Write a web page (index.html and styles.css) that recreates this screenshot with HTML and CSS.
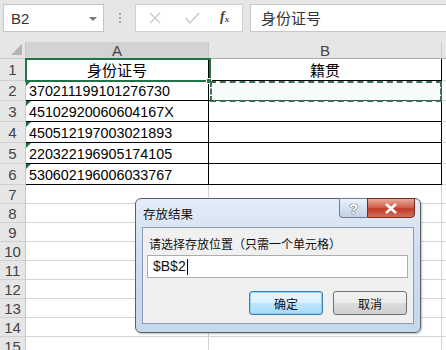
FILE: index.html
```html
<!DOCTYPE html>
<html>
<head>
<meta charset="utf-8">
<link rel="stylesheet" href="styles.css">
</head>
<body>
<div class="app">
  <div class="toolbar">
    <div class="namebox"><span>B2</span><span class="dd"></span></div>
    <div class="sep"><i></i><i></i><i></i></div>
    <div class="fbtns">
      <svg width="108" height="26" viewBox="0 0 108 26">
        <path d="M14 8 L24 18 M24 8 L14 18" stroke="#c8c8c8" stroke-width="1.4" fill="none"/>
        <path d="M50 13 L54 18 L63 8" stroke="#c8c8c8" stroke-width="1.4" fill="none"/>
      </svg>
      <span class="fx">f<sub>x</sub></span>
    </div>
    <div class="fbar">身份证号</div>
  </div>
  <div class="grid">
    <div class="corner"><span class="tri"></span></div>
    <div class="ch sel">A</div>
    <div class="ch">B</div>
    <div class="ch last"></div>

    <div class="rh">1</div>
    <div class="c t ctr">身份证号</div>
    <div class="c t ctr tr">籍贯</div>
    <div class="c last"></div>

    <div class="rh">2</div>
    <div class="c t num"><span class="flag"></span>370211199101276730</div>
    <div class="c t tr"></div>
    <div class="c last"></div>

    <div class="rh">3</div>
    <div class="c t num"><span class="flag"></span>45102920060604167X</div>
    <div class="c t tr"></div>
    <div class="c last"></div>

    <div class="rh">4</div>
    <div class="c t num"><span class="flag"></span>450512197003021893</div>
    <div class="c t tr"></div>
    <div class="c last"></div>

    <div class="rh">5</div>
    <div class="c t num"><span class="flag"></span>220322196905174105</div>
    <div class="c t tr"></div>
    <div class="c last"></div>

    <div class="rh">6</div>
    <div class="c t num"><span class="flag"></span>530602196006033767</div>
    <div class="c t tr"></div>
    <div class="c last"></div>

    <div class="rh">7</div><div class="c"></div><div class="c"></div><div class="c last"></div>
    <div class="rh">8</div><div class="c"></div><div class="c"></div><div class="c last"></div>
    <div class="rh">9</div><div class="c"></div><div class="c"></div><div class="c last"></div>
    <div class="rh">10</div><div class="c"></div><div class="c"></div><div class="c last"></div>
    <div class="rh">11</div><div class="c"></div><div class="c"></div><div class="c last"></div>
    <div class="rh">12</div><div class="c"></div><div class="c"></div><div class="c last"></div>
    <div class="rh">13</div><div class="c"></div><div class="c"></div><div class="c last"></div>
    <div class="rh">14</div><div class="c"></div><div class="c"></div><div class="c last"></div>
    <div class="rh">15</div><div class="c"></div><div class="c"></div><div class="c last"></div>
  </div>

  <div class="selbox"></div>
  <div class="handle"></div>
  <div class="ants"></div>

  <div class="dialog">
    <div class="titlebar">
      <span class="title">存放结果</span>
      <div class="tbtns">
        <div class="help">?</div>
        <div class="close">
          <svg width="14" height="11" viewBox="0 0 14 11"><path d="M2 1 L12 10 M12 1 L2 10" stroke="#fff" stroke-width="2.6" fill="none"/></svg>
        </div>
      </div>
    </div>
    <div class="panel">
      <div class="label">请选择存放位置<span class="paren">（</span>只需一个单元格<span class="paren">）</span></div>
      <div class="input">$B$2<span class="caret"></span></div>
      <div class="actions">
        <div class="btn primary">确定</div>
        <div class="btn">取消</div>
      </div>
    </div>
  </div>
</div>
</body>
</html>
```
FILE: styles.css
```css
* { box-sizing: border-box; }
html, body { margin: 0; padding: 0; }
body {
  width: 446px; height: 350px; overflow: hidden;
  font-family: "Liberation Sans", "Noto Sans CJK SC", sans-serif;
  background: #fff;
}
.app { position: relative; width: 446px; height: 350px; overflow: hidden; }

.toolbar {
  height: 42px; background: #e6e6e6;
  display: flex; align-items: flex-start; padding-top: 4px;
}
.namebox {
  margin-left: 3px; width: 101px; height: 28px;
  background: #fff; border: 1px solid #c6c6c6;
  display: flex; align-items: center; justify-content: space-between;
  padding: 0 6px 0 7px; font-size: 15px; color: #333;
}
.dd {
  width: 0; height: 0; border-left: 4px solid transparent; border-right: 4px solid transparent;
  border-top: 4px solid #777; margin-top: 1px;
}
.sep {
  width: 31px; height: 28px; display: flex; flex-direction: column;
  align-items: center; justify-content: center; gap: 2px;
}
.sep i { display: block; width: 2px; height: 2px; background: #a8a8a8; }
.fbtns {
  width: 108px; height: 28px; background: #fff; border: 1px solid #d0d0d0;
  position: relative;
}
.fbtns svg { display: block; }
.fx {
  position: absolute; left: 84px; top: 4px;
  font-family: "Liberation Serif", serif; font-style: italic; font-weight: bold;
  font-size: 14px; color: #444;
}
.fx sub { font-size: 9px; vertical-align: -1px; }
.fbar {
  margin-left: 7px; flex: 1; height: 28px; background: #fff;
  border: 1px solid #c6c6c6; border-right: none;
  padding-left: 10px; line-height: 26px;
  font-family: "Noto Sans CJK SC", sans-serif; font-size: 15px; color: #333;
}

.grid {
  display: grid;
  grid-template-columns: 26px 183px 233px 1fr;
  grid-template-rows: 17px 22px 20px 21px 21px 21px 21px repeat(9, 19px);
}
.corner, .ch, .rh { background: #e6e6e6; color: #444; }
.corner { border-right: 1px solid #c8c8c8; border-bottom: 1px solid #c8c8c8; position: relative; }
.tri {
  position: absolute; right: 3px; bottom: 3px; width: 0; height: 0;
  border-left: 11px solid transparent; border-bottom: 11px solid #b4b4b4;
}
.ch {
  border-right: 1px solid #c8c8c8; border-bottom: 1px solid #ababab;
  text-align: center; font-size: 15px; line-height: 17px;
}
.ch.sel { background: #d3d3d3; border-bottom: 1px solid #9d9d9d; }
.ch.last { border-right: none; }
.rh {
  border-right: 1px solid #c8c8c8; border-bottom: 1px solid #d0d0d0;
  text-align: center; font-size: 15px; display: flex; align-items: center; justify-content: center;
}
.c {
  border-right: 1px solid #d4d4d4; border-bottom: 1px solid #d4d4d4;
  position: relative; color: #000; font-size: 14.3px;
  display: flex; align-items: center;
}
.c.last { border-right: none; }
.c.t { border-bottom-color: #000; border-right-color: #000; }
.c.ctr { justify-content: center; font-family: "Noto Sans CJK SC", sans-serif; font-size: 15px; }
.num { padding-left: 3px; padding-top: 1px; }
.flag {
  position: absolute; left: 0; top: 0; width: 0; height: 0;
  border-right: 5px solid transparent; border-top: 5px solid #1e7145;
}

.selbox {
  position: absolute; left: 25px; top: 58px; width: 186px; height: 24px;
  border: 2px solid #217346;
}
.handle {
  position: absolute; left: 206px; top: 78px; width: 6px; height: 6px;
  background: #217346; border: 1px solid #fff;
}
.ants {
  position: absolute; left: 210px; top: 81px; width: 232px; height: 21px;
  border: 2px dashed #3b6e52; background: rgba(230, 245, 238, 0.3);
}

.dialog {
  position: absolute; left: 135px; top: 198px; width: 286px; height: 135px;
  border: 1px solid #5b5f66; border-radius: 6px;
  background: linear-gradient(#e4edf8, #cfddef 40%, #c6d7ec);
  box-shadow: 1px 1px 2px rgba(0,0,0,0.25);
  display: flex; flex-direction: column;
}
.titlebar {
  height: 28px; display: flex; justify-content: space-between; align-items: flex-start;
}
.title {
  font-family: "Noto Sans CJK SC", sans-serif; font-size: 12.5px; color: #111;
  padding: 6px 0 0 7px; line-height: 18px;
}
.tbtns { display: flex; margin-right: 5px; margin-top: -1px; }
.help, .close {
  height: 20px; border: 1px solid #6e7d92; display: flex; align-items: center; justify-content: center;
}
.help {
  width: 28px; border-right: none; border-radius: 0 0 0 4px;
  background: linear-gradient(#eef3fa, #d4e0ef 50%, #c2d2e6);
  color: #fff; font-weight: bold; font-size: 15px;
  text-shadow: 0 0 1px #333, 0 0 1px #333;
}
.close {
  width: 48px; border-radius: 0 0 4px 0; border-color: #7a2b22;
  background: linear-gradient(#e9a99c, #d2634f 45%, #c13b26 55%, #d1705c);
}
.panel {
  margin: 0 6px 8px 6px; flex: 1;
  background: #f0f0f0; border: 1px solid #8b9db5;
  padding: 7px 5px 0 4px;
}
.label {
  font-family: "Noto Sans CJK SC", sans-serif; font-size: 12px; color: #111;
  line-height: 18px; padding-left: 2px;
}
.paren { display: inline-block; width: 12px; text-align: center; }
.input {
  margin-top: 2px; height: 23px; background: #fff; border: 1px solid #adadad;
  font-size: 14px; line-height: 21px; padding-left: 5px; color: #111;
  display: flex; align-items: center;
}
.caret { display: inline-block; width: 1px; height: 16px; background: #000; margin-left: 1px; }
.actions { display: flex; justify-content: flex-end; gap: 10px; margin-top: 13px; padding-right: 1px; }
.btn {
  width: 74px; height: 24px; border: 1px solid #707070; border-radius: 3px;
  background: linear-gradient(#f2f2f2, #ebebeb 50%, #dddddd 50%, #cfcfcf);
  font-family: "Noto Sans CJK SC", sans-serif; font-size: 12px; color: #111;
  display: flex; align-items: center; justify-content: center;
}
.btn.primary {
  border-color: #3c7fb1;
  box-shadow: inset 0 0 0 1px #8fd0f0;
  background: linear-gradient(#eaf6fd, #d9f0fc 50%, #bee6fd 50%, #a7d9f5);
}
```
